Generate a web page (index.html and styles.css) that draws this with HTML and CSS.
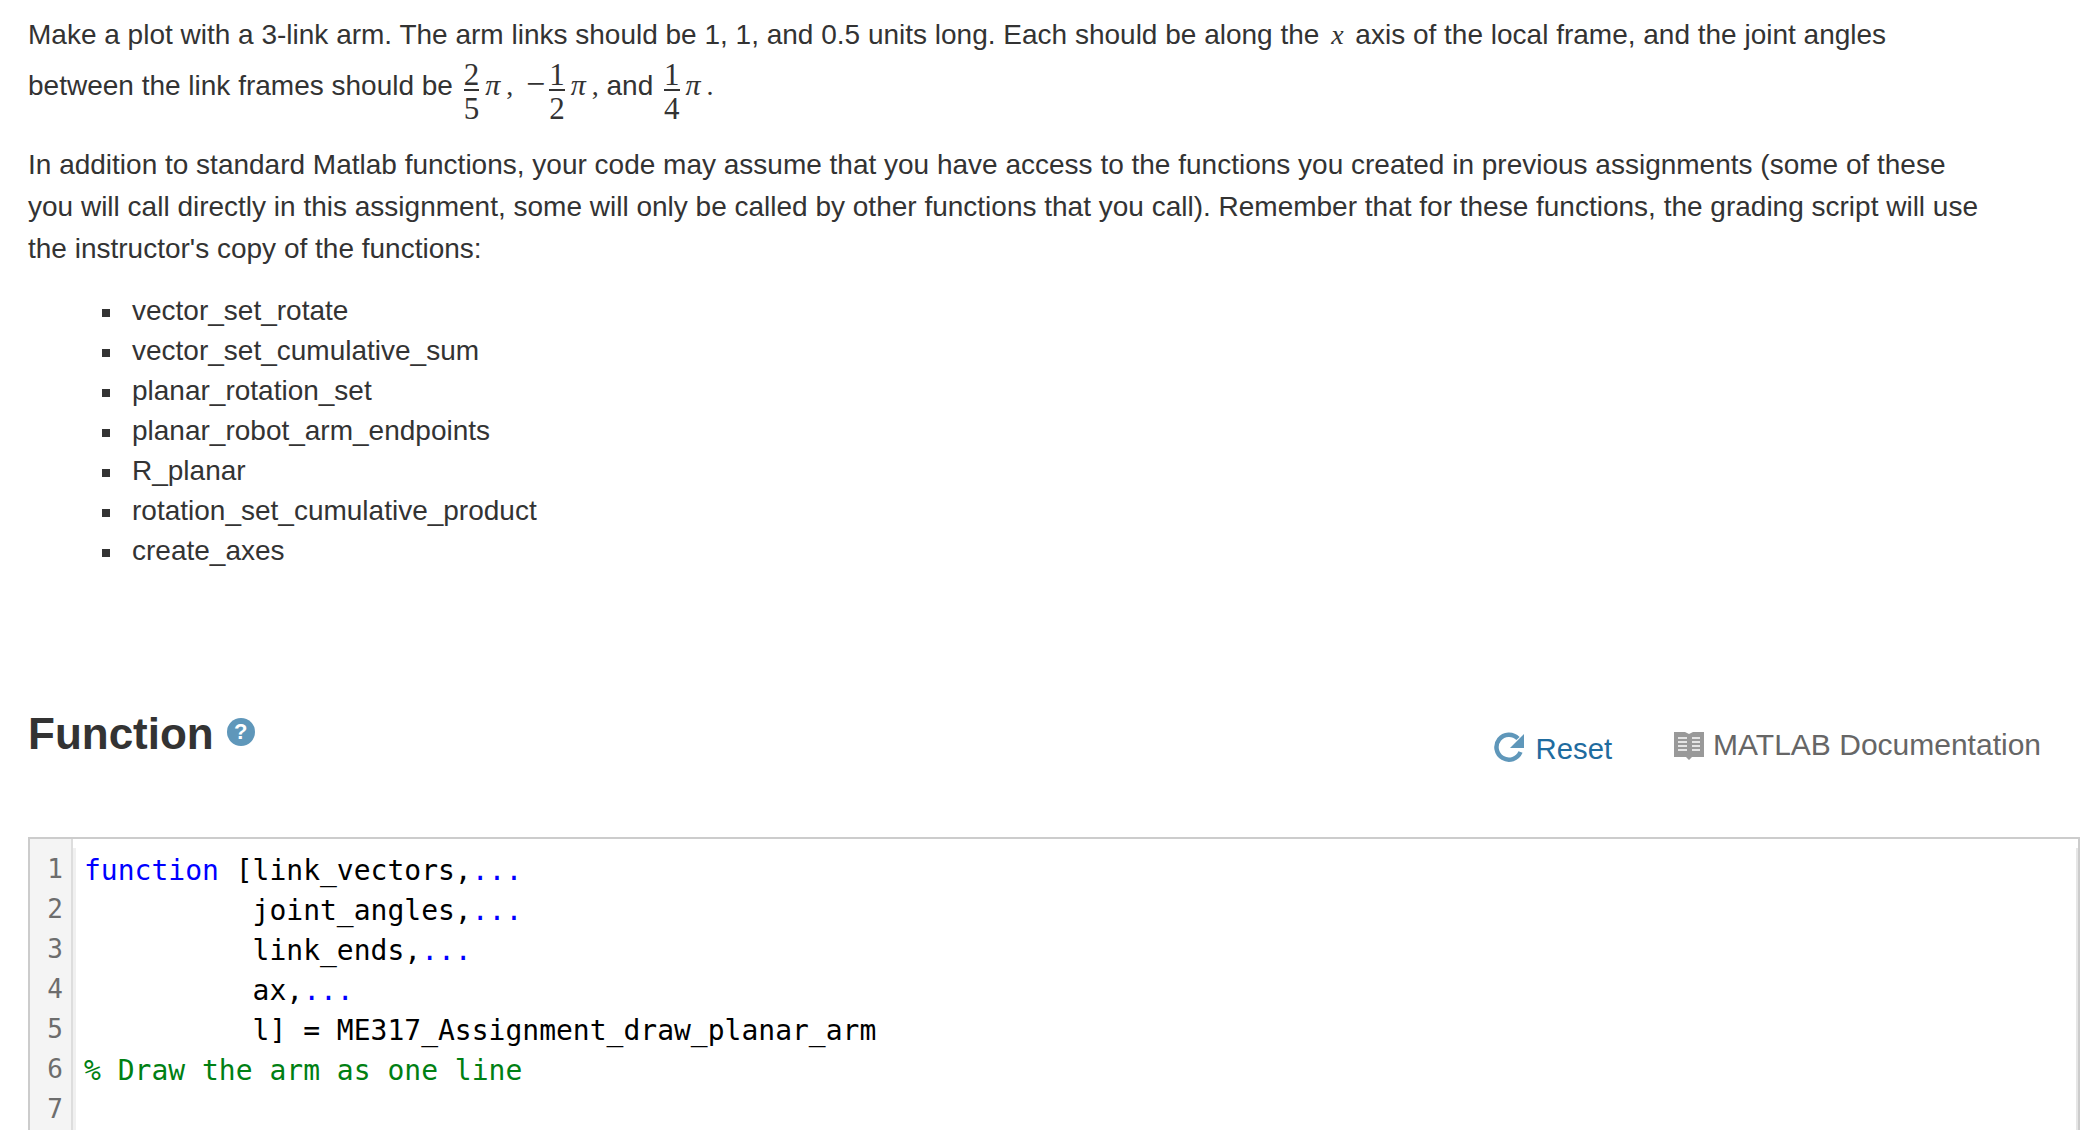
FILE: index.html
```html
<!DOCTYPE html>
<html lang="en">

<head>
    <meta charset="UTF-8">
    <title>ME317 Assignment</title>
    <link rel="stylesheet" href="styles.css">
</head>

<body>
    <div class="problem">
        <p>Make a plot with a 3-link arm. The arm links should be 1, 1, and 0.5 units long. Each should be along the <span class="math var">x</span> axis of the local frame, and the joint angles between the link frames should be
            <span class="frac"><span class="num">2</span><span class="den">5</span></span><span class="math pi">π</span><span class="math comma">,</span>
            <span class="math minus">−</span><span class="frac"><span class="num">1</span><span class="den">2</span></span><span class="math pi">π</span><span class="math comma">,</span> and
            <span class="frac"><span class="num">1</span><span class="den">4</span></span><span class="math pi">π</span><span class="math comma">.</span></p>
        <p>In addition to standard Matlab functions, your code may assume that you have access to the functions you created in previous assignments (some of these you will call directly in this assignment, some will only be called by other functions that you call). Remember that for these functions, the grading script will use the instructor's copy of the functions:</p>
        <ul>
            <li>vector_set_rotate</li>
            <li>vector_set_cumulative_sum</li>
            <li>planar_rotation_set</li>
            <li>planar_robot_arm_endpoints</li>
            <li>R_planar</li>
            <li>rotation_set_cumulative_product</li>
            <li>create_axes</li>
        </ul>
    </div>

    <div class="section-head">
        <h2>Function <span class="help">?</span></h2>
        <div class="actions">
            <a class="reset">
                <svg class="reset-icon" width="30" height="31" viewBox="0 0 30 31">
                    <path d="M24 7.5A12.5 12.5 0 1 0 26.5 21" fill="none" stroke="#5f97ba" stroke-width="4.5"/>
                    <path d="M30 3V17H16Z" fill="#5f97ba"/>
                </svg>
                Reset
            </a>
            <a class="docs">
                <svg class="book-icon" width="30" height="29" viewBox="0 0 30 29">
                    <path d="M0 1H11L15 3L19 1H30V26H18L15 29L12 26H0Z" fill="#999"/>
                    <path d="M4 7H13M4 11H13M4 15H13M4 19H13M18 7H26M18 11H26M18 15H26M18 19H26" stroke="#e4e4e4" stroke-width="2"/>
                </svg>
                MATLAB Documentation
            </a>
        </div>
    </div>

    <div class="editor">
        <div class="gutter">
            <div>1</div>
            <div>2</div>
            <div>3</div>
            <div>4</div>
            <div>5</div>
            <div>6</div>
            <div>7</div>
        </div>
        <pre class="code"><span class="kw">function</span> [link_vectors,<span class="kw">...</span>
          joint_angles,<span class="kw">...</span>
          link_ends,<span class="kw">...</span>
          ax,<span class="kw">...</span>
          l] = ME317_Assignment_draw_planar_arm
<span class="comment">% Draw the arm as one line</span>
</pre>
    </div>
</body>

</html>
```

FILE: styles.css
```css
html,
body {
    height: 1132px;
    overflow: hidden;
}

body {
    box-sizing: border-box;
    margin: 0;
    padding: 14px 12px 0 28px;
    background-color: #fff;
    color: #333;
    font-family: "Liberation Sans", Arial, sans-serif;
    font-size: 28px;
    line-height: 42px;
}

p {
    margin: 0 0 22px;
    max-width: 1957px;
}

p + p {
    margin-bottom: 21px;
}

.math {
    font-family: "Liberation Serif", "Times New Roman", serif;
}

.var {
    font-style: italic;
    margin: 0 4px;
}

.pi {
    font-style: italic;
    font-size: 30px;
    margin-left: 6px;
}

.comma {
    margin-left: 6px;
}

.minus {
    margin-left: 5px;
    margin-right: 4px;
    font-size: 34px;
    line-height: 24px;
}

.frac {
    display: inline-flex;
    flex-direction: column;
    align-items: center;
    vertical-align: 10px;
    margin: 7px 0 1px 3px;
    font-family: "Liberation Serif", "Times New Roman", serif;
    font-size: 31px;
    line-height: 24px;
}

.minus + .frac {
    margin-left: 0;
}

.num {
    padding-bottom: 2px;
    border-bottom: 2px solid #333;
}

.den {
    margin-top: 6px;
}

ul {
    margin: 0;
    padding-left: 104px;
    line-height: 40px;
    list-style: none;
}

li::before {
    content: "";
    display: inline-block;
    width: 8px;
    height: 8px;
    margin: 0 22px 3px -30px;
    background-color: #333;
}

.section-head {
    display: flex;
    justify-content: space-between;
    align-items: flex-start;
    margin-top: 138px;
    height: 128px;
    padding-right: 39px;
}

h2 {
    display: flex;
    align-items: center;
    gap: 13px;
    margin: 0;
    font-size: 44px;
    line-height: 50px;
}

.help {
    display: flex;
    justify-content: center;
    align-items: center;
    width: 28px;
    height: 28px;
    margin-top: -4px;
    border-radius: 50%;
    background-color: #5f97ba;
    color: #fff;
    font-size: 22px;
    line-height: 28px;
}

.actions {
    display: flex;
    align-items: flex-start;
    gap: 62px;
    margin-top: 19px;
}

.reset,
.docs {
    display: flex;
    align-items: center;
    line-height: 34px;
}

.reset {
    gap: 12px;
    margin-top: 3px;
    color: #1f6c9f;
    font-size: 29.3px;
}

.reset-icon {
    margin-bottom: 5px;
}

.docs {
    gap: 9px;
    color: #666;
    font-size: 30px;
}

.editor {
    display: flex;
    height: 291px;
    border: 2px solid #ccc;
    border-bottom: none;
    font-family: "DejaVu Sans Mono", monospace;
    font-size: 28px;
    line-height: 40px;
}

.gutter {
    box-sizing: border-box;
    width: 43px;
    padding: 10px 8px 0 0;
    background-color: #f4f4f4;
    border-right: 2px solid #ddd;
    color: #6d6d6d;
    font-size: 26px;
    text-align: right;
}

.code {
    flex: 1;
    margin: 9px 0 0;
    padding: 3px 0 0 8px;
    border-left: 3px solid #f0f0f0;
    border-right: 2px solid #e6e6e6;
    color: #000;
    font: inherit;
}

.kw {
    color: #0000ff;
}

.comment {
    color: #008013;
}
```
